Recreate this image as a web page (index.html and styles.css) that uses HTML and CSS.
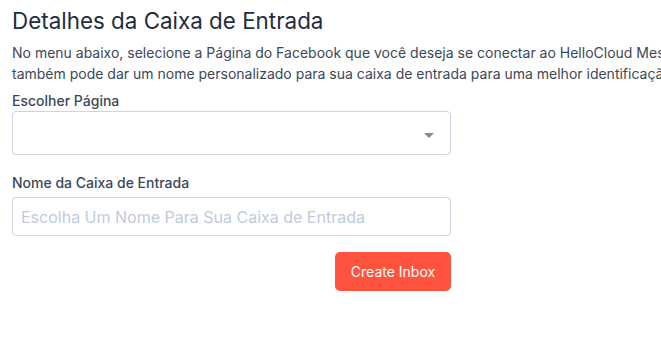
FILE: index.html
```html
<!DOCTYPE html>
<html lang="pt">
<head>
<meta charset="utf-8">
<link rel="stylesheet" href="styles.css">
</head>
<body>
<div class="page">
  <h2 class="title">Detalhes da Caixa de Entrada</h2>
  <p class="desc">No menu abaixo, selecione a Página do Facebook que você deseja se conectar ao HelloCloud Messenger. Você<br>também pode dar um nome personalizado para sua caixa de entrada para uma melhor identificação.</p>
  <form class="form">
    <label class="field">
      <span class="label">Escolher Página</span>
      <span class="select"><span class="caret"></span></span>
    </label>
    <label class="field field-2">
      <span class="label">Nome da Caixa de Entrada</span>
      <input class="input" type="text" placeholder="Escolha Um Nome Para Sua Caixa de Entrada">
    </label>
    <div class="actions">
      <button class="btn" type="button">Create Inbox</button>
    </div>
  </form>
</div>
</body>
</html>
```
FILE: styles.css
```css
html, body {
  margin: 0;
  padding: 0;
  background: #ffffff;
  overflow: hidden;
}
.page {
  padding: 8px 12px 0;
  font-family: Inter, "Noto Sans", sans-serif;
  color: #3c4858;
}
.title {
  margin: 0;
  font-size: 22.4px;
  line-height: 25px;
  font-weight: 400;
  color: #1f2d3d;
}
.desc {
  margin: 9px 0 0;
  font-size: 14px;
  line-height: 21px;
  white-space: nowrap;
  color: #3c4858;
}
.form {
  width: 439px;
  margin-top: 7px;
  display: flex;
  flex-direction: column;
}
.field {
  display: flex;
  flex-direction: column;
}
.field-2 {
  margin-top: 18px;
}
.label {
  font-size: 14px;
  line-height: 20px;
  font-weight: 500;
  color: #3c4858;
}
.select {
  position: relative;
  height: 44px;
  box-sizing: border-box;
  border: 1px solid #c9d6e2;
  border-radius: 4px;
  background: #fff;
}
.caret {
  position: absolute;
  right: 16px;
  top: 21px;
  width: 0;
  height: 0;
  border-left: 5px solid transparent;
  border-right: 5px solid transparent;
  border-top: 5px solid #8a8a8a;
}
.input {
  height: 39px;
  box-sizing: border-box;
  border: 1px solid #c9d6e2;
  border-radius: 4px;
  padding: 0 8px;
  font-family: Inter, "Noto Sans", sans-serif;
  font-size: 16px;
  color: #3c4858;
  outline: none;
  margin: 4px 0 0;
}
.input::placeholder {
  color: #c0ccda;
}
.actions {
  display: flex;
  justify-content: flex-end;
  margin-top: 16px;
}
.btn {
  width: 116px;
  height: 39px;
  border: none;
  border-radius: 5px;
  background: #ff5340;
  color: #ffffff;
  font-family: Inter, "Noto Sans", sans-serif;
  font-size: 14px;
  font-weight: 400;
  cursor: pointer;
}
```
